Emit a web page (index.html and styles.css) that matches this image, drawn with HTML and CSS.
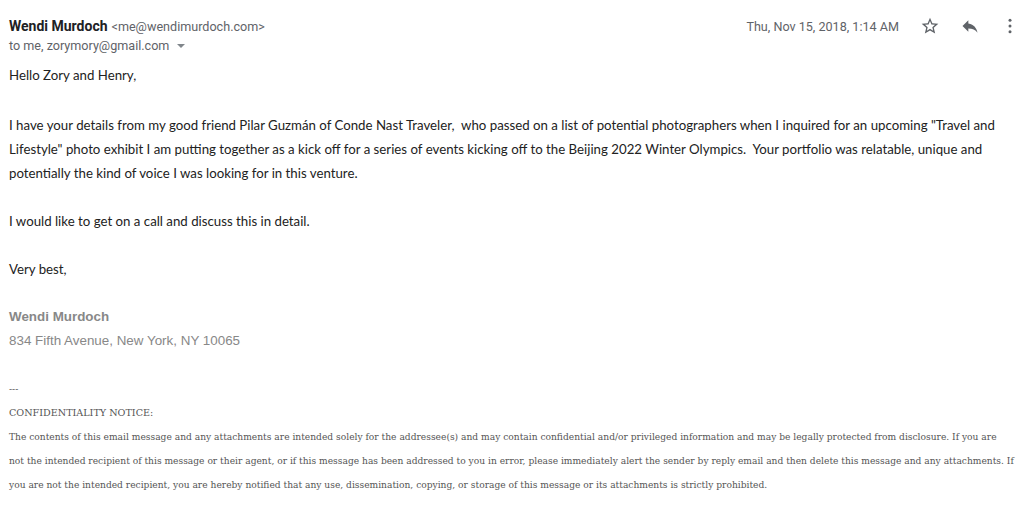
FILE: index.html
```html
<!DOCTYPE html>
<html>
<head>
<meta charset="utf-8">
<link rel="stylesheet" href="styles.css">
</head>
<body>
<div class="mail">
  <div class="header">
    <div class="who">
      <div class="from"><span class="name">Wendi Murdoch</span> <span class="addr">&lt;me@wendimurdoch.com&gt;</span></div>
      <div class="to">to me, zorymory@gmail.com <span class="caret"></span></div>
    </div>
    <div class="meta">
      <span class="date">Thu, Nov 15, 2018, 1:14 AM</span>
      <svg class="ico star" width="20" height="20" viewBox="0 0 24 24"><path d="M22 9.24l-7.19-.62L12 2 9.19 8.63 2 9.24l5.46 4.73L5.82 21 12 17.27 18.18 21l-1.63-7.03L22 9.24zM12 15.4l-3.76 2.27 1-4.28-3.32-2.88 4.38-.38L12 6.1l1.71 4.04 4.38.38-3.32 2.88 1 4.28L12 15.4z" fill="#5f6368"/></svg>
      <svg class="ico reply" width="20" height="20" viewBox="0 0 24 24"><path d="M10 9V5l-7 7 7 7v-4.1c5 0 8.5 1.6 11 5.1-1-5-4-10-11-11z" fill="#5f6368"/></svg>
      <svg class="ico more" width="20" height="20" viewBox="0 0 24 24"><circle cx="12" cy="5" r="1.8" fill="#5f6368"/><circle cx="12" cy="12" r="1.8" fill="#5f6368"/><circle cx="12" cy="19" r="1.8" fill="#5f6368"/></svg>
    </div>
  </div>
  <div class="body">
    <p class="line">Hello Zory and Henry,</p>
    <p class="blank first"></p>
    <p class="line">I have your details from my good friend Pilar Guzmán of Conde Nast Traveler,&nbsp; who passed on a list of potential photographers when I inquired for an upcoming "Travel and Lifestyle" photo exhibit I am putting together as a kick off for a series of events kicking off to the Beijing 2022 Winter Olympics.&nbsp; Your portfolio was relatable, unique and potentially the kind of voice I was looking for in this venture.</p>
    <p class="blank"></p>
    <p class="line">I would like to get on a call and discuss this in detail.</p>
    <p class="blank"></p>
    <p class="line">Very best,</p>
    <p class="blank"></p>
    <div class="sig">
      <p class="sig-name">Wendi Murdoch</p>
      <p>834 Fifth Avenue, New York, NY 10065</p>
    </div>
    <p class="blank"></p>
    <div class="notice">
      <p>---</p>
      <p class="caps">CONFIDENTIALITY NOTICE:</p>
      <p>The contents of this email message and any attachments are intended solely for the addressee(s) and may contain confidential and/or privileged information and may be legally protected from disclosure. If you are<br>not the intended recipient of this message or their agent, or if this message has been addressed to you in error, please immediately alert the sender by reply email and then delete this message and any attachments. If you are not the intended recipient, you are hereby notified that any use, dissemination, copying, or storage of this message or its attachments is strictly prohibited.</p>
    </div>
  </div>
</div>
</body>
</html>
```

FILE: styles.css
```css
html, body {
  margin: 0;
  padding: 0;
  background: #fff;
}
.mail {
  padding: 0 9px;
}
.header {
  display: flex;
  justify-content: space-between;
  align-items: flex-start;
  padding-top: 16px;
  font-family: Roboto, "Liberation Sans", sans-serif;
}
.from {
  line-height: 20px;
  height: 20px;
}
.name {
  font-size: 14px;
  font-weight: 700;
  color: #202124;
}
.addr {
  font-size: 12.6px;
  color: #5f6368;
}
.to {
  font-size: 12.6px;
  color: #5f6368;
  line-height: 20px;
  display: flex;
  align-items: center;
  gap: 6px;
}
.caret {
  width: 0;
  height: 0;
  border-left: 4px solid transparent;
  border-right: 4px solid transparent;
  border-top: 4px solid #80868b;
  margin-left: 2px;
}
.meta {
  display: flex;
  align-items: center;
  height: 20px;
}
.date {
  font-size: 12.6px;
  color: #5f6368;
  margin-right: 10px;
}
.ico {
  display: block;
}
.star {
  margin-left: 11px;
}
.reply {
  margin-left: 20px;
}
.more {
  margin-left: 20px;
}
.body {
  margin-top: 7px;
  font-family: Lato, "Open Sans", sans-serif;
  font-size: 13.25px;
  line-height: 24px;
  color: #222;
}
.body p {
  margin: 0;
}
.blank {
  height: 24px;
}
.blank.first {
  height: 25.5px;
}
.sig {
  font-family: "Liberation Sans", Arial, sans-serif;
  font-size: 13.4px;
  color: #888;
}
.sig-name {
  font-weight: 700;
}
.notice {
  font-family: "DejaVu Serif", "Liberation Serif", serif;
  font-size: 9.12px;
  color: #555;
  line-height: 24.2px;
}
.caps {
  font-size: 9.6px;
}
```
